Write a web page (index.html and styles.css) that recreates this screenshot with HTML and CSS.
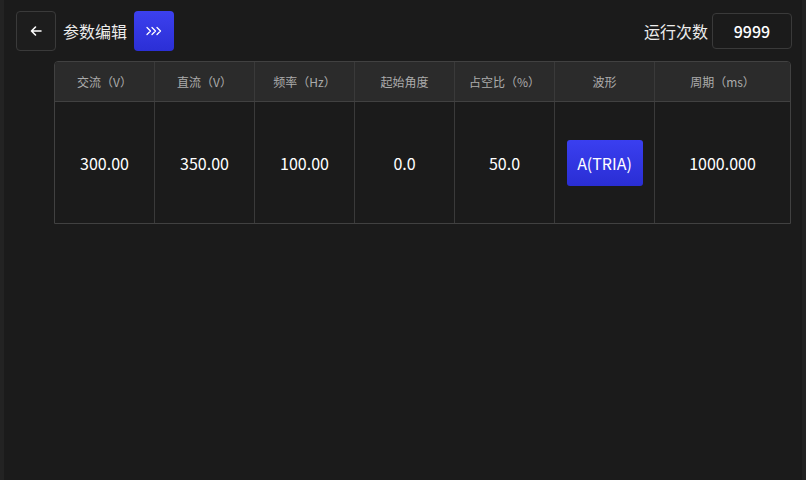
FILE: index.html
```html
<!DOCTYPE html>
<html lang="zh-CN">
<head>
<meta charset="utf-8">
<link rel="stylesheet" href="styles.css">
</head>
<body>
<div class="page">
  <header class="topbar">
    <div class="left">
      <button class="back" aria-label="返回">
        <svg width="14" height="14" viewBox="0 0 14 14"><path d="M12 7H2.5M6.5 3L2.5 7l4 4" fill="none" stroke="#fff" stroke-width="1.6" stroke-linecap="round" stroke-linejoin="round"/></svg>
      </button>
      <span class="title">参数编辑</span>
      <button class="more" aria-label="更多">
        <svg width="18" height="12" viewBox="0 0 18 12"><path d="M2 2.5L5.5 6 2 9.5M7 2.5L10.5 6 7 9.5M12 2.5L15.5 6 12 9.5" fill="none" stroke="#fff" stroke-width="1.3" stroke-linecap="round" stroke-linejoin="round"/></svg>
      </button>
    </div>
    <div class="right">
      <span class="label">运行次数</span>
      <div class="count">9999</div>
    </div>
  </header>
  <div class="table">
    <div class="row head">
      <div class="cell">交流（V）</div>
      <div class="cell">直流（V）</div>
      <div class="cell">频率（Hz）</div>
      <div class="cell">起始角度</div>
      <div class="cell">占空比（%）</div>
      <div class="cell">波形</div>
      <div class="cell last">周期（ms）</div>
    </div>
    <div class="row body">
      <div class="cell">300.00</div>
      <div class="cell">350.00</div>
      <div class="cell">100.00</div>
      <div class="cell">0.0</div>
      <div class="cell">50.0</div>
      <div class="cell"><button class="wave">A(TRIA)</button></div>
      <div class="cell last">1000.000</div>
    </div>
  </div>
</div>
</body>
</html>
```
FILE: styles.css
```css
* { box-sizing: border-box; }
html, body { margin: 0; height: 100%; }
body {
  background: #1b1b1b;
  font-family: "Noto Sans CJK SC", "Noto Sans", sans-serif;
  color: #fff;
}
.page {
  height: 480px;
  border-left: 4px solid #232323;
  border-right: 4px solid #222;
  padding: 11px 10px 0 12px;
}
.topbar {
  display: flex;
  justify-content: space-between;
  align-items: center;
  height: 40px;
}
.left, .right { display: flex; align-items: center; }
.back {
  width: 40px; height: 40px;
  border: 1px solid #3a3a3a;
  border-radius: 4px;
  background: #1d1d1d;
  display: flex; align-items: center; justify-content: center;
  padding: 0;
}
.title {
  font-size: 16px;
  color: #ececec;
  margin-left: 7px;
  margin-right: 7px;
  line-height: 1;
}
.more {
  width: 40px; height: 40px;
  border: none;
  border-radius: 4px;
  background: linear-gradient(180deg, #3c40ee 0%, #2b2fd6 100%);
  display: flex; align-items: center; justify-content: center;
  padding: 0;
}
.label {
  font-size: 16px;
  color: #ececec;
  margin-right: 4px;
  line-height: 1;
}
.count {
  width: 80px; height: 36px;
  border: 1px solid #3a3a3a;
  border-radius: 4px;
  display: flex; align-items: center; justify-content: center;
  font-size: 16px;
  font-weight: 500;
  color: #fff;
}
.table {
  margin: 10px 0 0 38px;
  width: 737px;
  border: 1px solid #414141;
  border-radius: 4px 4px 0 0;
  overflow: hidden;
}
.row { display: flex; }
.cell {
  width: 100px;
  display: flex; align-items: center; justify-content: center;
  border-right: 1px solid #3a3a3a;
}
.cell.last { flex: 1; border-right: none; }
.head { height: 40px; background: #2b2b2b; border-bottom: 1px solid #414141; }
.head .cell { font-size: 12px; color: #ababab; }
.body { height: 121px; }
.body .cell { font-size: 16px; font-weight: 400; color: #fff; }
.wave {
  width: 76px; height: 46px;
  border: none;
  border-radius: 3px;
  background: linear-gradient(180deg, #3a3ff0 0%, #2a2ed4 100%);
  color: #fff;
  font-family: "Noto Sans CJK SC", "Noto Sans", sans-serif;
  font-size: 16px;
  padding: 0;
}
```
